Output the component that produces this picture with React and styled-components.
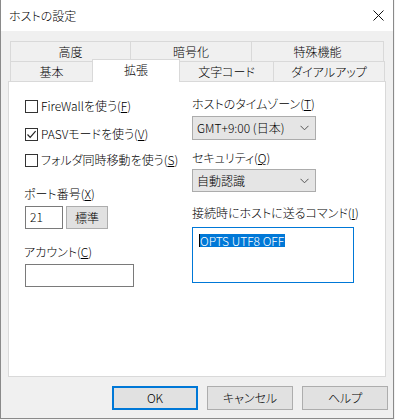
import React from "react";
import styled, { createGlobalStyle } from "styled-components";

const GlobalStyle = createGlobalStyle`
  html, body {
    margin: 0;
    background: #f3f3f3;
  }
  body {
    font-family: "Noto Sans CJK JP", "Noto Sans", sans-serif;
    font-size: 12px;
    font-weight: 300;
    font-feature-settings: "palt";
    color: #000;
  }
  * {
    box-sizing: border-box;
  }
`;

const Window = styled.div`
  width: 394px;
  height: 419px;
  background: #f0f0f0;
  border: 1px solid #8a8a8a;
  border-top: none;
  display: flex;
  flex-direction: column;
`;

const TitleBar = styled.div`
  height: 31px;
  background: #fff;
  display: flex;
  align-items: center;
  justify-content: space-between;
  padding: 0 9px 0 8px;
  font-size: 12px;
`;

const Body = styled.div`
  flex: 1;
  padding-top: 10px;
  display: flex;
  flex-direction: column;
`;

const TabRow = styled.div`
  display: flex;
  margin-left: 9px;
  margin-top: ${(p) => (p.$second ? "-1px" : "0")};
`;

const Tab = styled.div`
  width: ${(p) => p.$w}px;
  height: ${(p) => (p.$active ? 23 : 21)}px;
  margin-top: ${(p) => (p.$active ? "-2px" : "0")};
  margin-left: -1px;
  &:first-child {
    margin-left: 0;
  }
  border: 1px solid #d9d9d9;
  border-bottom: ${(p) => (p.$active ? "none" : "1px solid #d9d9d9")};
  background: ${(p) => (p.$active ? "#fff" : "#f0f0f0")};
  position: relative;
  z-index: ${(p) => (p.$active ? 2 : 1)};
  display: flex;
  align-items: ${(p) => (p.$active ? "flex-start" : "center")};
  padding-top: ${(p) => (p.$active ? "2px" : "0")};
  justify-content: center;
  line-height: 16px;
`;

const Panel = styled.div`
  margin: -1px 0 0 7px;
  width: 378px;
  height: 296px;
  background: #fff;
  border: 1px solid #d9d9d9;
  display: grid;
  grid-template-columns: 168px 1fr;
  padding: 14px 0 0 15px;
`;

const Column = styled.div`
  display: flex;
  flex-direction: column;
`;

const CheckRow = styled.label`
  display: flex;
  align-items: center;
  gap: 3px;
  height: 20px;
  margin-bottom: ${(p) => p.$mb || 0}px;
  line-height: 16px;
`;

const Box = styled.span`
  width: 13px;
  height: 13px;
  border: 1px solid #333;
  background: #fff;
  display: flex;
  align-items: center;
  justify-content: center;
  margin-left: 1px;
`;

const Label = styled.div`
  line-height: 16px;
  margin-top: ${(p) => p.$mt || 0}px;
  margin-bottom: ${(p) => p.$mb || 0}px;
`;

const Row = styled.div`
  display: flex;
  gap: 3px;
`;

const Edit = styled.div`
  width: ${(p) => p.$w}px;
  height: ${(p) => p.$h}px;
  border: 1px solid #7a7a7a;
  background: #fff;
  padding: 2px 4px;
  line-height: 16px;
  margin-left: 1px;
`;

const Button = styled.div`
  width: ${(p) => p.$w || 86}px;
  height: ${(p) => p.$h || 24}px;
  background: #e1e1e1;
  border: ${(p) => (p.$default ? "2px solid #0078d7" : "1px solid #adadad")};
  display: flex;
  align-items: center;
  justify-content: center;
  line-height: 16px;
`;

const Select = styled.div`
  width: 124px;
  height: ${(p) => p.$h}px;
  background: #e5e5e5;
  border: 1px solid #acacac;
  display: flex;
  align-items: center;
  justify-content: space-between;
  padding: 0 6px 0 4px;
  line-height: 16px;
`;

const CommandBox = styled.div`
  width: 162px;
  height: 56px;
  border: 1px solid #0078d7;
  background: #fff;
  padding: 4px 0 0 6px;
`;

const Selected = styled.span`
  display: inline-block;
  background: #0078d7;
  color: #fff;
  line-height: 13px;
  height: 13px;
  border-left: 1px solid #000;
  padding-right: 1px;
`;

const Footer = styled.div`
  display: flex;
  justify-content: flex-end;
  gap: 9px;
  padding: 9px 5px 0 0;
`;

const Chevron = () => (
  <svg width="9" height="6" viewBox="0 0 9 6">
    <path d="M0.5 0.8 L4.5 4.8 L8.5 0.8" fill="none" stroke="#555" strokeWidth="1" />
  </svg>
);

const Check = () => (
  <svg width="11" height="11" viewBox="0 0 11 11">
    <path d="M1.5 5.5 L4.2 8.3 L9.6 2.2" fill="none" stroke="#222" strokeWidth="1.2" />
  </svg>
);

const Close = () => (
  <svg width="11" height="11" viewBox="0 0 11 11">
    <path d="M0.5 0.5 L10.5 10.5 M10.5 0.5 L0.5 10.5" stroke="#111" strokeWidth="1" />
  </svg>
);

const Key = ({ k }) => (
  <>
    (<u>{k}</u>)
  </>
);

export default function App() {
  return (
    <>
      <GlobalStyle />
      <Window>
        <TitleBar>
          <span>ホストの設定</span>
          <Close />
        </TitleBar>
        <Body>
          <TabRow>
            <Tab $w={121}>高度</Tab>
            <Tab $w={122}>暗号化</Tab>
            <Tab $w={133}>特殊機能</Tab>
          </TabRow>
          <TabRow $second>
            <Tab $w={83}>基本</Tab>
            <Tab $w={88} $active>拡張</Tab>
            <Tab $w={95}>文字コード</Tab>
            <Tab $w={112}>ダイアルアップ</Tab>
          </TabRow>
          <Panel>
            <Column>
              <CheckRow $mb={8}>
                <Box />
                <span>
                  FireWallを使う<Key k="F" />
                </span>
              </CheckRow>
              <CheckRow $mb={6}>
                <Box>
                  <Check />
                </Box>
                <span>
                  PASVモードを使う<Key k="V" />
                </span>
              </CheckRow>
              <CheckRow>
                <Box />
                <span>
                  フォルダ同時移動を使う<Key k="S" />
                </span>
              </CheckRow>
              <Label $mt={16} $mb={4}>
                ポート番号<Key k="X" />
              </Label>
              <Row>
                <Edit $w={38} $h={23}>21</Edit>
                <Button $w={42} $h={23}>標準</Button>
              </Row>
              <Label $mt={15} $mb={4}>
                アカウント<Key k="C" />
              </Label>
              <Edit $w={109} $h={23} />
            </Column>
            <Column>
              <Label $mb={4}>
                ホストのタイムゾーン<Key k="T" />
              </Label>
              <Select $h={24}>
                <span>GMT+9:00 (日本)</span>
                <Chevron />
              </Select>
              <Label $mt={10} $mb={3}>
                セキュリティ<Key k="Q" />
              </Label>
              <Select $h={23}>
                <span>自動認識</span>
                <Chevron />
              </Select>
              <Label $mt={13} $mb={6}>
                接続時にホストに送るコマンド<Key k="I" />
              </Label>
              <CommandBox>
                <Selected>OPTS UTF8 OFF</Selected>
              </CommandBox>
            </Column>
          </Panel>
          <Footer>
            <Button $default>OK</Button>
            <Button>キャンセル</Button>
            <Button>ヘルプ</Button>
          </Footer>
        </Body>
      </Window>
    </>
  );
}
